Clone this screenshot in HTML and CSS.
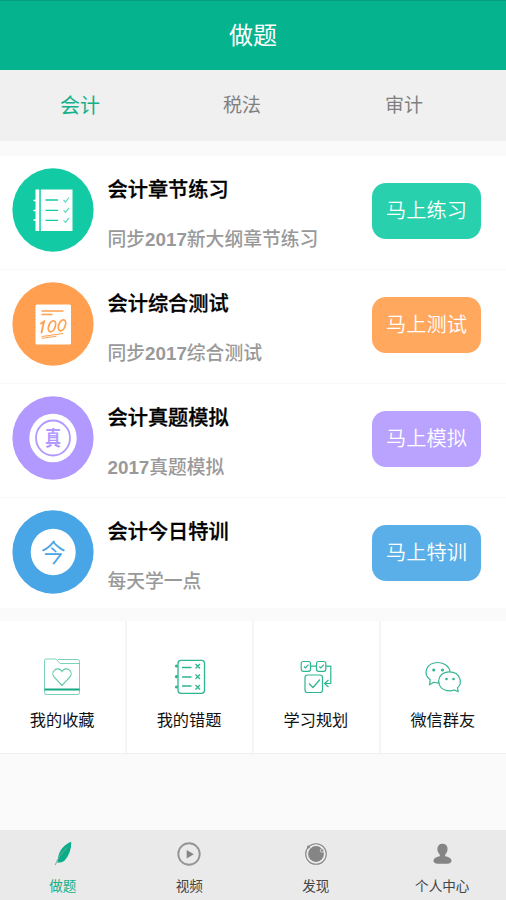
FILE: index.html
```html
<!DOCTYPE html>
<html lang="zh-CN">
<head>
<meta charset="utf-8">
<title>做题</title>
<link rel="stylesheet" href="styles.css">
</head>
<body>
<div class="app">
  <header class="header">做题</header>
  <nav class="tabs">
    <a class="tab active">会计</a>
    <a class="tab">税法</a>
    <a class="tab">审计</a>
  </nav>
  <main class="main">
    <section class="list">
      <article class="row">
        <svg class="badge" viewBox="0 0 82 84">
          <ellipse cx="41" cy="42" rx="40.6" ry="41.7" fill="#12cba4"/>
          <path fill="#fff" d="M23.500 21.500h3.800v41.500h-3.800zM28.800 21.500H60.500V63H28.800z"/>
          <path stroke="#fff" stroke-width="1.300" d="M21.500 32.500h4M21.500 42.500h4M21.500 52h4"/>
          <path fill="none" stroke="#12cba4" stroke-width="1.300" d="M33.500 32H46M33.500 42.300H46M33.500 52.300H46"/>
          <path fill="none" stroke="#5bd9bf" stroke-width="1.200" d="M51.500 32l2 2 3.500-4.500M51.500 42.300l2 2 3.500-4.500M51.500 52.300l2 2 3.500-4.500"/>
        </svg>
        <div class="info">
          <h2 class="title">会计章节练习</h2>
          <p class="sub">同步<b>2017</b>新大纲章节练习</p>
        </div>
        <a class="go green">马上练习</a>
      </article>
      <article class="row">
        <svg class="badge" viewBox="0 0 82 84">
          <ellipse cx="41" cy="42" rx="40.600" ry="41.700" fill="#ff9f4f"/>
          <rect x="23.500" y="22.500" width="35.500" height="40" rx="1.500" fill="#fff"/>
          <g fill="none" stroke="#ffa14f" stroke-linecap="round">
            <path stroke-width="1.400" d="M30 29h21M30 32.500h10"/>
            <path stroke-width="1.900" d="M29 41.500l3-2-2.500 11"/>
            <ellipse cx="40" cy="44.300" rx="3.200" ry="5.700" transform="rotate(22 40 44.300)" stroke-width="1.800"/>
            <ellipse cx="50" cy="43.300" rx="3.200" ry="5.700" transform="rotate(22 50 43.300)" stroke-width="1.800"/>
            <path stroke-width="1" d="M30 54.500l21-3M30 56.300l14-2"/>
          </g>
        </svg>
        <div class="info">
          <h2 class="title">会计综合测试</h2>
          <p class="sub">同步<b>2017</b>综合测试</p>
        </div>
        <a class="go orange">马上测试</a>
      </article>
      <article class="row">
        <svg class="badge" viewBox="0 0 82 84">
          <ellipse cx="41" cy="42" rx="40.600" ry="41.700" fill="#b299ff"/>
          <ellipse cx="41" cy="42" rx="23.700" ry="24.300" fill="#fff"/>
          <ellipse cx="41" cy="42" rx="17" ry="17.500" fill="none" stroke="#b299ff" stroke-width="1.800"/>
          <text class="glyph-exam" transform="translate(41 49.500) scale(.8 1)">真</text>
        </svg>
        <div class="info">
          <h2 class="title">会计真题模拟</h2>
          <p class="sub"><b>2017</b>真题模拟</p>
        </div>
        <a class="go purple">马上模拟</a>
      </article>
      <article class="row">
        <svg class="badge" viewBox="0 0 82 84">
          <ellipse cx="41" cy="42" rx="40.600" ry="41.700" fill="#48a6e6"/>
          <ellipse cx="41.200" cy="42" rx="22.500" ry="23.300" fill="#fff"/>
          <text class="glyph-today" x="41.200" y="51.500">今</text>
        </svg>
        <div class="info">
          <h2 class="title">会计今日特训</h2>
          <p class="sub">每天学一点</p>
        </div>
        <a class="go blue">马上特训</a>
      </article>
    </section>
    <section class="grid">
      <a class="cell">
        <svg class="tool" viewBox="0 0 40 40">
          <g fill="none" stroke="#5cc8a8" stroke-width=".8">
            <path d="M2.500 35.500V3.500q0-1.500 1.500-1.500h10l4 4.500h19.500v29q0 2-1.500 2H4q-1.500 0-1.500-2zM16 2.500h19.500q2 0 2 2V7"/>
            <path stroke-width="1.100" d="M20 28.500l-8-8.500c-4-5 3.500-12 8-5.500 4.500-6.500 12 .5 8 5.500z"/>
          </g>
          <path stroke="#14a982" stroke-width="2.200" d="M2.500 32.500h35"/>
        </svg>
        <span class="label">我的收藏</span>
      </a>
      <a class="cell">
        <svg class="tool" viewBox="0 0 40 40">
          <g fill="none" stroke="#2eb591" stroke-width="1.300">
            <rect x="9" y="3.300" width="26.500" height="33" rx="3"/>
            <path d="M13 10.500h9.500M13 20h9.500M13 29h9.500M26.500 7l4.500 4.500m0-4.500l-4.500 4.500M26.500 17.500l4.500 4.500m0-4.500l-4.500 4.500M26.500 28l4.500 4.500m0-4.500l-4.500 4.500"/>
          </g>
          <g fill="#2eb591"><circle cx="7.500" cy="9" r="1.600"/><circle cx="7.500" cy="19.700" r="1.600"/><circle cx="7.500" cy="30" r="1.600"/></g>
        </svg>
        <span class="label">我的错题</span>
      </a>
      <a class="cell">
        <svg class="tool" viewBox="0 0 40 40">
          <g fill="none" stroke="#2eb591" stroke-width="1.200">
            <rect x="5.200" y="4.500" width="9.300" height="9.800" rx="2"/>
            <rect x="20.500" y="4.500" width="9.300" height="9.800" rx="2"/>
            <rect x="9" y="18" width="17.500" height="17.500" rx="2.500"/>
            <path d="M14.500 9.200h6M29.800 9.200h5v17.300h-6M32.500 23l-4 3.500 4 3.500M13 26.500l4 4 7-8M8 9.500l1.500 1.500 3-3.300M23.300 9.500l1.500 1.500 3-3.300"/>
          </g>
        </svg>
        <span class="label">学习规划</span>
      </a>
      <a class="cell">
        <svg class="tool" viewBox="0 0 40 40">
          <g fill="none" stroke="#36b796" stroke-width="1.200">
            <path d="M16.500 25.800q-3 .3-5.500-.6l-4.500 2.500.7-5C-.5 17 3 5.500 15 5.500c6.500 0 11.500 4 12 9.300"/>
            <path d="M34.500 30.800c5-4 3.500-16-8-16-14.500 0-14.500 19 0 19q2.500 0 4.500-.8l4.200 1.500z"/>
          </g>
          <g fill="#2eb591"><circle cx="10.700" cy="13" r="1.500"/><circle cx="19.500" cy="13" r="1.500"/><circle cx="23.500" cy="22" r="1.300"/><circle cx="30.500" cy="22" r="1.300"/></g>
        </svg>
        <span class="label">微信群友</span>
      </a>
    </section>
  </main>
  <footer class="bar">
    <a class="item active">
      <svg class="icon" viewBox="0 0 28 28">
        <path fill="#0aad87" d="M22.200 1.800c-6.500 2.500-11.500 8-13 15l-.8 6q4.500-.2 6.800-1.800 7.500-8 7-19.200z"/>
        <path fill="none" stroke="#7aa99c" stroke-width="1" d="M6.200 25Q10 15 18 7.500"/>
      </svg>
      <span>做题</span>
    </a>
    <a class="item">
      <svg class="icon" viewBox="0 0 28 28">
        <circle cx="14" cy="14" r="10.700" fill="none" stroke="#959595" stroke-width="1.900"/>
        <path fill="#858585" d="M11.700 9.900v8.600l7.100-4.300z"/>
      </svg>
      <span>视频</span>
    </a>
    <a class="item">
      <svg class="icon" viewBox="0 0 28 28">
        <circle cx="14" cy="14" r="10.300" fill="none" stroke="#858585" stroke-width="1.100"/>
        <circle cx="14" cy="14" r="7.900" fill="#858585"/>
        <circle cx="6.500" cy="7" r="1.400" fill="#858585"/>
        <circle cx="20" cy="10.500" r="1.700" fill="#858585" stroke="#eaeaea" stroke-width=".8"/>
      </svg>
      <span>发现</span>
    </a>
    <a class="item">
      <svg class="icon" viewBox="0 0 28 28">
        <path fill="#858585" d="M14.500 3.800c6.500 0 6 8 2.700 10.700v1.800c3 .5 6.300 1.800 6.300 4.700 0 1.500-1.500 2.500-4 2.700h-10c-2.500-.2-4-1.200-4-2.700 0-2.900 3.300-4.200 6.300-4.700v-1.800C8.500 11.800 8 3.800 14.500 3.800z"/>
      </svg>
      <span>个人中心</span>
    </a>
  </footer>
</div>
</body>
</html>
```
FILE: styles.css
```css
* {
  box-sizing: border-box;
}

body {
  margin: 0;
  background: #fafafa;
  font-family: "Liberation Sans", "Noto Sans CJK SC", sans-serif;
}

.app {
  display: flex;
  flex-direction: column;
  height: 900px;
  overflow: hidden;
}

.header {
  height: 70px;
  flex: none;
  border-top: 1px solid #079f7d;
  background: #06b38f;
  color: #fff;
  font-size: 24px;
  line-height: 69px;
  text-align: center;
}

.tabs {
  display: flex;
  flex: none;
  height: 71px;
  padding-right: 20px;
  background: #f0f0f0;
}

.tab {
  flex: 1;
  padding-right: 2px;
  color: #808080;
  font-size: 19px;
  line-height: 72px;
  text-align: center;
}

.tab.active {
  color: #12b08b;
  font-size: 20px;
}

.main {
  flex: 1;
  padding-top: 15px;
}

.list {
  display: flex;
  flex-direction: column;
  gap: 1px;
  height: 452px;
  background: #f9f9f9;
}

.row {
  display: flex;
  align-items: flex-start;
  height: 113px;
  flex: none;
  padding: 12px 25px 0 12px;
  background: #fff;
}

.row:last-child {
  height: 110px;
}

.badge {
  width: 82px;
  height: 84px;
}

.info {
  flex: 1;
  padding: 6px 0 0 13.500px;
  white-space: nowrap;
}

.title {
  margin: 0;
  color: #000;
  font-size: 20.200px;
  font-weight: 500;
  line-height: 32px;
  -webkit-text-stroke: 0.300px #000;
}

.sub {
  margin: 18px 0 0;
  color: #999;
  font-size: 18.800px;
  font-weight: 500;
  line-height: 32px;
}

.go {
  width: 109px;
  height: 56px;
  margin-top: 15px;
  border-radius: 14px;
  color: #fff;
  font-size: 20.200px;
  font-weight: 350;
  line-height: 57px;
  text-align: center;
}

.green { background: #28d0ad; }
.orange { background: #ffa85e; }
.purple { background: #b9a3ff; }
.blue { background: #5aafe8; }

.glyph-exam {
  fill: #b299ff;
  font-size: 20px;
  font-weight: 700;
  text-anchor: middle;
}

.glyph-today {
  fill: #48a6e6;
  font-size: 25px;
  font-weight: 350;
  text-anchor: middle;
}

.grid {
  display: grid;
  grid-template-columns: repeat(4, 1fr);
  gap: 1.500px;
  margin-top: 13px;
  border-bottom: 1px solid #f0f0f0;
  background: #f5f5f5;
}

.cell {
  display: flex;
  flex-direction: column;
  align-items: center;
  height: 132px;
  padding: 36px 1px 0 0;
  background: #fff;
}

.tool {
  width: 40px;
  height: 40px;
}

.label {
  margin-top: 10px;
  color: #111;
  font-size: 16.200px;
  line-height: 26px;
}

.bar {
  display: flex;
  flex: none;
  height: 70px;
  background: #eaeaea;
}

.item {
  display: flex;
  flex: 1;
  flex-direction: column;
  align-items: center;
  padding: 10px 1px 0 0;
  color: #444;
  font-size: 13.600px;
  line-height: 20px;
}

.item.active {
  color: #12b08b;
}

.icon {
  width: 28px;
  height: 28px;
  margin-bottom: 9px;
}
```
